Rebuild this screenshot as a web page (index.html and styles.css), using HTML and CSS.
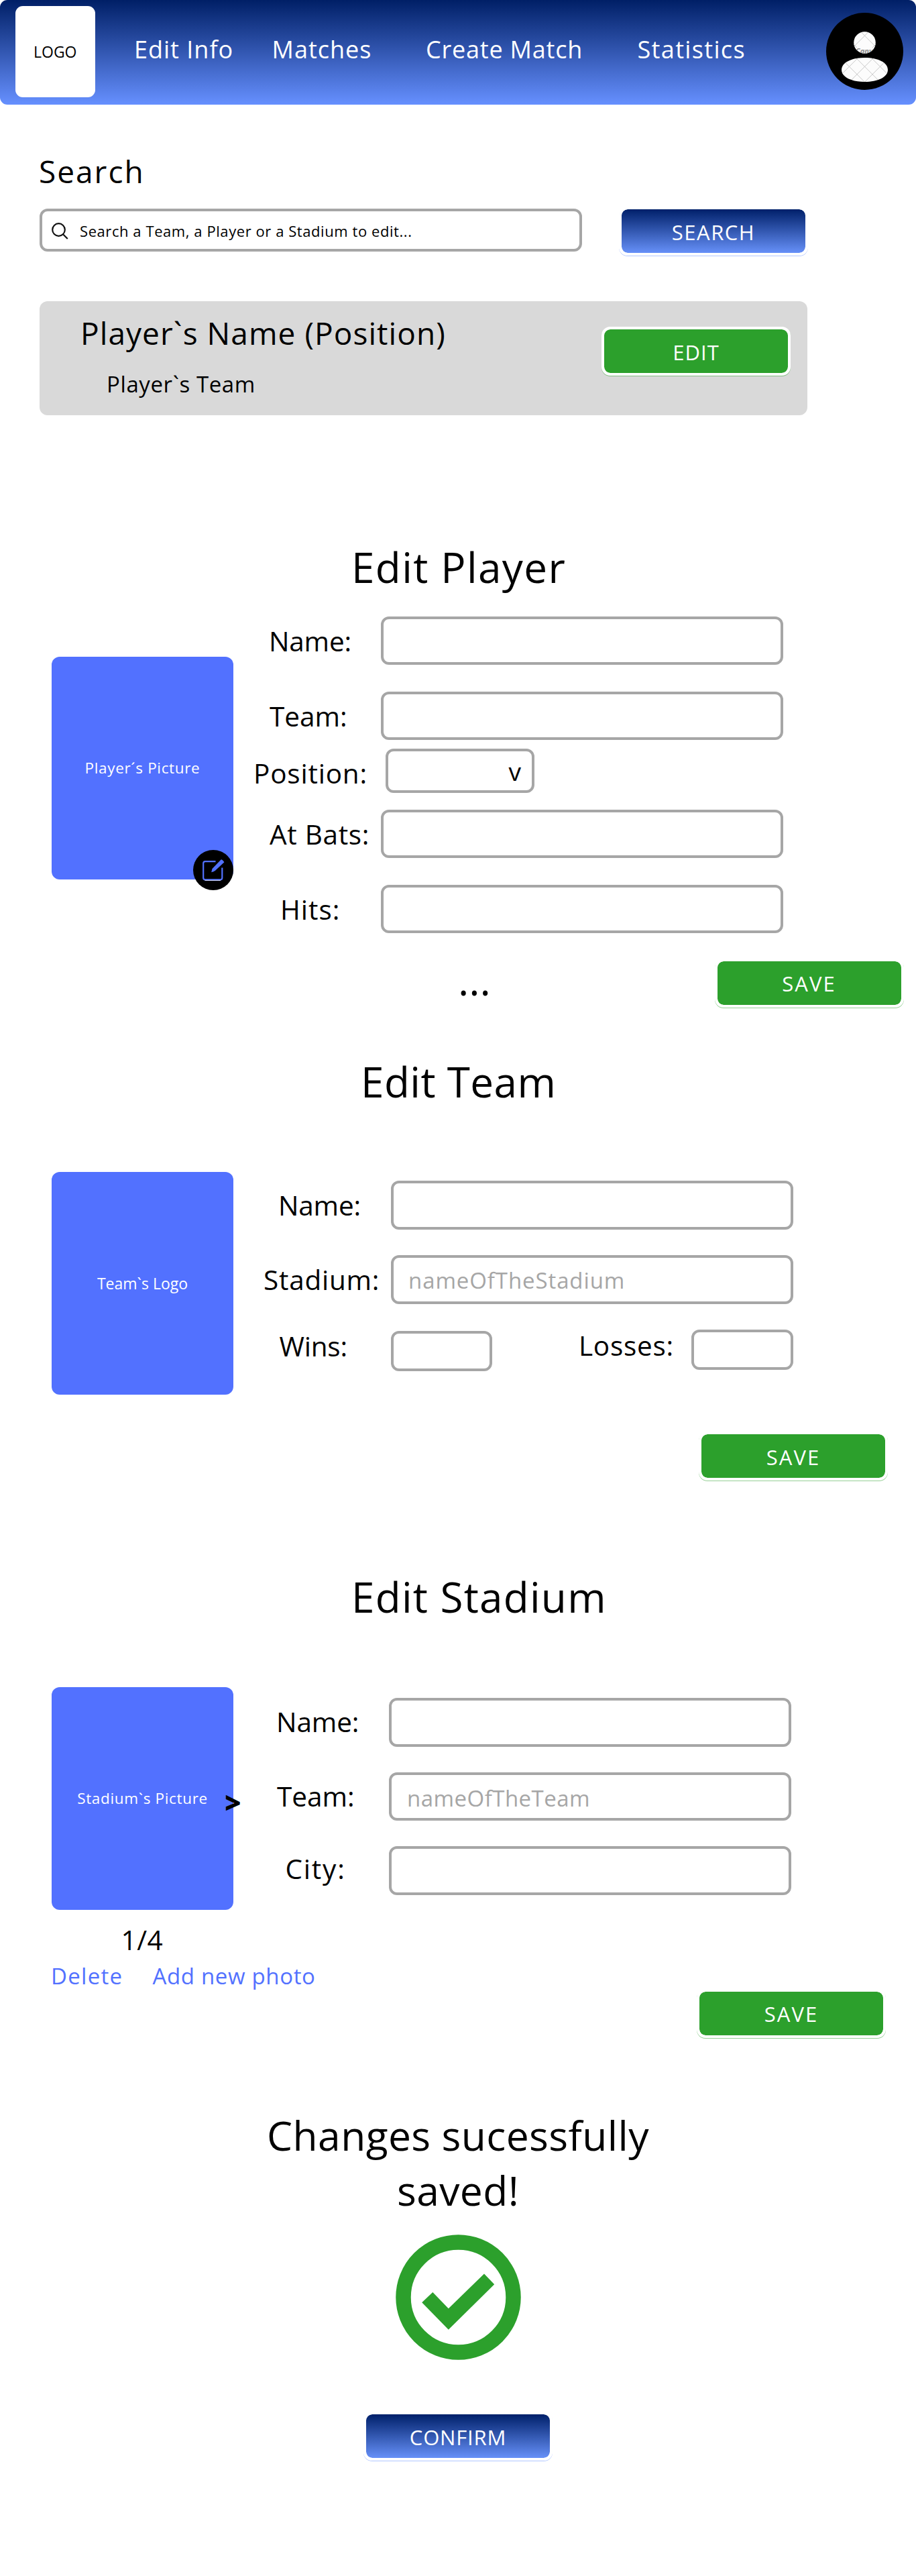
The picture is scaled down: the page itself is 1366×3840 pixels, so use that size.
FILE: index.html
```html
<!DOCTYPE html>
<html lang="en">
<head>
<meta charset="utf-8">
<title>Edit Info</title>
<link rel="stylesheet" href="styles.css">
</head>
<body>
<header class="topbar">
  <div class="logo">LOGO</div>
  <a class="nav-link">Edit Info</a>
  <a class="nav-link">Matches</a>
  <a class="nav-link nav-create">Create Match</a>
  <a class="nav-link nav-stats">Statistics</a>
  <svg class="avatar" viewBox="0 0 115 115">
    <defs>
      <clipPath id="person">
        <circle cx="57.5" cy="44.5" r="16.3"/>
        <path d="M57.5 67C77 67 92 74 92 85S77 103 57.5 103 23 96 23 85 38 67 57.5 67Z"/>
      </clipPath>
    </defs>
    <circle cx="57.5" cy="57.5" r="57.5" fill="#000"/>
    <g clip-path="url(#person)">
      <rect width="115" height="115" fill="#fcfcfc"/>
      <path d="M41 50.8L57.5 34.3L74 50.8M52 28.5L57.5 34.3L63 28.5M41 47L46 52M74 47L69 52M34.5 57.3L80.5 103.3M34.5 103.3L80.5 57.3M11.5 103.3L57.5 57.3M57.5 103.3L103.5 57.3M11.5 57.3L57.5 103.3M57.5 57.3L103.5 103.3" fill="none" stroke="#c9c9c9" stroke-width="1"/>
      <text x="44" y="60.5" class="watermark">Canva</text>
    </g>
  </svg>
</header>

<main>
  <section class="search">
    <h2 class="search-title">Search</h2>
    <div class="search-row">
      <div class="field search-field">
        <svg class="search-icon" viewBox="0 0 25 25"><circle cx="10.5" cy="10.5" r="9.3"/><path d="M17 17.2L23.8 24"/></svg>
        <span>Search a Team, a Player or a Stadium to edit...</span>
      </div>
      <button class="btn btn-blue btn-search">SEARCH</button>
    </div>
    <article class="result">
      <div>
        <h3 class="result-name">Player`s Name (Position)</h3>
        <p class="result-team">Player`s Team</p>
      </div>
      <button class="btn btn-edit">EDIT</button>
    </article>
  </section>

  <section class="panel player">
    <h1 class="panel-title">Edit Player</h1>
    <div class="editor">
      <div class="picture">
        <span class="wide">Player´s Picture</span>
        <svg class="edit-badge" viewBox="0 0 60 60">
          <circle cx="30" cy="30" r="30" fill="#000"/>
          <path d="M33.5 17.2H18a2.8 2.8 0 0 0-2.8 2.8V41.5a2.8 2.8 0 0 0 2.8 2.8H40.5a2.8 2.8 0 0 0 2.8-2.8V26.5" fill="none" stroke="#5271ff" stroke-width="2.2"/>
          <path d="M17.5 45.4H41" stroke="#e4e7ff" stroke-width="1"/>
          <path d="M27.2 33.2L28.5 28L41.5 14.4Q43.5 14 46.4 18.2L33 30.8Q31 32.4 27.2 33.2Z" fill="#5271ff"/>
        </svg>
      </div>
      <div class="form">
        <div class="row"><label class="label name">Name:</label><div class="field"></div></div>
        <div class="row"><label class="label team">Team:</label><div class="field"></div></div>
        <div class="row row-position"><label class="label position">Position:</label><div class="field select">v</div></div>
        <div class="row row-bats"><label class="label bats">At Bats:</label><div class="field"></div></div>
        <div class="row row-hits"><label class="label hits">Hits:</label><div class="field"></div></div>
      </div>
    </div>
    <div class="player-footer">
      <span class="more">...</span>
      <button class="btn">SAVE</button>
    </div>
  </section>

  <section class="panel club">
    <h1 class="panel-title">Edit Team</h1>
    <div class="editor">
      <div class="picture">Team`s Logo</div>
      <div class="form">
        <div class="row"><label class="label name">Name:</label><div class="field"></div></div>
        <div class="row"><label class="label stadium">Stadium:</label><div class="field placeholder">nameOfTheStadium</div></div>
        <div class="row row-record">
          <label class="label wins">Wins:</label><div class="field wins-field"></div>
          <label class="label losses">Losses:</label><div class="field losses-field"></div>
        </div>
      </div>
    </div>
    <button class="btn">SAVE</button>
  </section>

  <section class="panel venue">
    <h1 class="panel-title">Edit Stadium</h1>
    <div class="editor">
      <div class="picture"><span class="wide">Stadium`s Picture</span><span class="next">&gt;</span></div>
      <div class="form">
        <div class="row"><label class="label name">Name:</label><div class="field"></div></div>
        <div class="row"><label class="label team">Team:</label><div class="field placeholder">nameOfTheTeam</div></div>
        <div class="row"><label class="label city">City:</label><div class="field"></div></div>
      </div>
    </div>
    <div class="venue-footer">
      <div class="photo-tools">
        <p class="counter">1/4</p>
        <div class="links"><a class="delete">Delete</a><a class="add">Add new photo</a></div>
      </div>
      <button class="btn">SAVE</button>
    </div>
  </section>

  <section class="done">
    <h1 class="done-title">Changes sucessfully saved!</h1>
    <svg class="check" viewBox="0 0 187 187">
      <circle cx="93.5" cy="93.5" r="82" fill="none" stroke="#2ca02c" stroke-width="22.5"/>
      <path d="M39.2 101.2L55.3 86L78.8 110.3L132 58.5L147.2 74.3L78.8 141.7Z" fill="#2ca02c"/>
    </svg>
    <button class="btn btn-blue btn-confirm">CONFIRM</button>
  </section>
</main>
</body>
</html>
```

FILE: styles.css
```css
* { box-sizing: border-box; margin: 0; padding: 0; }

body {
  width: 1366px;
  background: #fff;
  color: #000;
  font-family: "Open Sans", "Noto Sans", sans-serif;
  line-height: 1;
}

h1, h2, h3 { font-weight: 400; }

/* Top bar */
.topbar {
  display: grid;
  grid-template-columns: 177px 205.5px 229.5px 315.5px 281px 115px;
  height: 156px;
  padding-left: 23px;
  border-radius: 11px;
  background: linear-gradient(#001f66, #6690ff);
}

.logo {
  display: flex;
  align-items: center;
  justify-content: center;
  width: 118.5px;
  height: 136px;
  margin-top: 9px;
  border-radius: 11px;
  background: #fff;
  font-size: 23px;
}

.nav-link {
  margin-top: 56px;
  color: #fff;
  font-size: 36px;
  letter-spacing: 1px;
  white-space: nowrap;
}

.nav-create { letter-spacing: 0.8px; }
.nav-stats { letter-spacing: 1.35px; }

.avatar { width: 115px; height: 115px; margin-top: 19px; }
.watermark { font: italic 700 11px "Open Sans", sans-serif; fill: #8d8d8d; }

/* Shared controls */
.field {
  display: flex;
  align-items: center;
  width: 600px;
  height: 72px;
  border: 4px solid #a6a6a6;
  border-radius: 12px;
  background: #fff;
}

.placeholder {
  padding: 1px 0 0 22px;
  color: #a6a6a6;
  font-size: 33px;
  letter-spacing: 0.9px;
}

.btn {
  flex: none;
  display: block;
  width: 282px;
  height: 73px;
  padding-top: 2px;
  border: 4px solid #fff;
  border-radius: 13px;
  background: #2ca02c padding-box;
  box-shadow: 0 1px 0 rgba(44, 160, 44, 0.5);
  color: #fff;
  font-family: inherit;
  font-size: 31px;
  letter-spacing: 2.1px;
}

.btn-blue {
  background: linear-gradient(#00206a, #6690f8) padding-box;
  box-shadow: 0 1px 0 rgba(102, 144, 255, 0.5);
}

.btn-search { letter-spacing: 1.5px; }
.btn-edit { letter-spacing: 1px; }
.btn-confirm { letter-spacing: 0.8px; }

/* Search */
.search { height: 644px; padding: 76px 0 0 59px; }
.search-title { margin-left: -1px; font-size: 46px; letter-spacing: 2px; }
.search-row { display: flex; gap: 55px; margin-top: 30px; }

.search-field {
  width: 809px;
  height: 64px;
  margin-top: 3px;
  padding: 2px 0 0 14px;
  gap: 17px;
  font-size: 22px;
  letter-spacing: 0.57px;
}

.search-icon {
  width: 25px;
  height: 25px;
  fill: none;
  stroke: #111;
  stroke-width: 2.2;
}

.result {
  display: flex;
  justify-content: space-between;
  width: 1145px;
  height: 170px;
  margin-top: 68px;
  padding: 24px 25px 0 61px;
  border-radius: 12px;
  background: #d9d9d9;
}

.result-name { font-size: 46px; letter-spacing: 1.05px; }
.result-team { margin: 37px 0 0 39px; font-size: 33px; letter-spacing: 0.6px; }
.result .btn { margin-top: 14px; }

/* Edit panels */
.panel { height: 760px; }
.panel-title { font-size: 62px; }
.editor { display: flex; align-items: flex-start; margin-left: 77px; }

.picture {
  position: relative;
  display: flex;
  align-items: center;
  justify-content: center;
  width: 271px;
  height: 332px;
  padding-top: 1px;
  border-radius: 12px;
  background: #5271ff;
  color: #fff;
  font-size: 22.5px;
}

.wide { letter-spacing: 0.66px; }

.row { display: flex; align-items: flex-start; margin-bottom: 39px; }
.label { flex: none; padding-top: 17px; font-size: 40.5px; }

/* Player */
.player { padding-top: 14px; }
.player .panel-title { padding-left: 524px; letter-spacing: 1.4px; }
.player .editor { height: 471px; margin-top: 43px; }
.player .picture { margin-top: 60px; }
.player .row { margin-bottom: 39.5px; }
.player .label { width: 220px; }
.player .name { padding-left: 53px; letter-spacing: -0.2px; }
.player .team { padding-left: 54px; }
.player .position { width: 227px; padding-left: 30px; letter-spacing: 0.8px; }
.player .bats { padding-left: 54px; letter-spacing: 0.7px; }
.player .hits { padding-left: 70px; letter-spacing: 1px; }
.player .row-position { margin: -26px 0 25px; }

.select {
  justify-content: flex-end;
  width: 222px;
  height: 66px;
  padding-right: 16px;
  font-size: 37px;
  font-weight: 500;
}

.edit-badge {
  position: absolute;
  right: 0;
  bottom: -16px;
  width: 60px;
  height: 60px;
}

.player-footer { display: grid; grid-template-columns: 382.5px auto; margin: 38.5px 0 0 683px; }
.more { font-size: 62px; }

/* Team */
.club { padding-top: 21px; }
.club .panel-title { padding-left: 538px; letter-spacing: 0.48px; }
.club .editor { margin-top: 104px; }
.club .picture { font-size: 23px; }
.club .form { padding-top: 13px; }
.club .row { margin-bottom: 38px; }
.club .field { height: 73px; }
.club .label { width: 235px; }
.club .name { padding-left: 67px; letter-spacing: -0.2px; }
.club .stadium { padding-left: 45px; letter-spacing: 0.75px; }
.club .wins { padding: 5px 0 0 68.5px; letter-spacing: -0.2px; }
.club .losses { width: 297px; padding: 4px 0 0 129px; letter-spacing: 0.73px; }
.club .wins-field { width: 151px; height: 60px; margin-top: 2px; }
.club .losses-field { width: 152px; height: 60px; }
.club .row-record { height: 60px; margin: 0; }
.club .btn { margin: 55px 0 0 1042px; }

/* Stadium */
.venue { height: 800px; padding-top: 29px; }
.venue .panel-title { padding-left: 524px; letter-spacing: 1.25px; }
.venue .editor { height: 332px; margin-top: 104px; }
.venue .form { padding-top: 16px; }
.venue .row { margin-bottom: 38px; }
.venue .field { height: 72.5px; }
.venue .label { width: 232px; padding-top: 16px; }
.venue .name { padding-left: 64px; letter-spacing: -0.1px; }
.venue .team { padding-left: 65px; }
.venue .city { padding: 14px 0 0 77.5px; letter-spacing: 1.8px; }
.venue .placeholder { padding: 5px 0 0 23px; letter-spacing: 0.47px; }
.next { position: absolute; top: 151px; left: 258px; color: #000; font-size: 42px; font-weight: 800; }

.venue-footer { display: flex; align-items: flex-start; }
.venue-footer .btn { margin-top: 117.5px; }
.photo-tools { width: 1039px; padding: 25px 0 0 76px; }
.counter { margin-left: 104.5px; font-size: 40.5px; letter-spacing: 0.5px; }
.links { display: flex; margin-top: 16px; color: #5271ff; font-size: 33px; }
.delete { width: 151.5px; letter-spacing: 1.3px; }
.add { letter-spacing: 0.65px; }

/* Confirmation */
.done {
  display: flex;
  flex-direction: column;
  align-items: center;
  height: 720px;
  padding-top: 22px;
}

.done-title {
  width: 640px;
  font-size: 60.5px;
  letter-spacing: 0.4px;
  line-height: 82px;
  text-align: center;
}

.check { width: 187px; height: 187px; margin-top: 25px; }
.done .btn { margin-top: 77px; }
```
